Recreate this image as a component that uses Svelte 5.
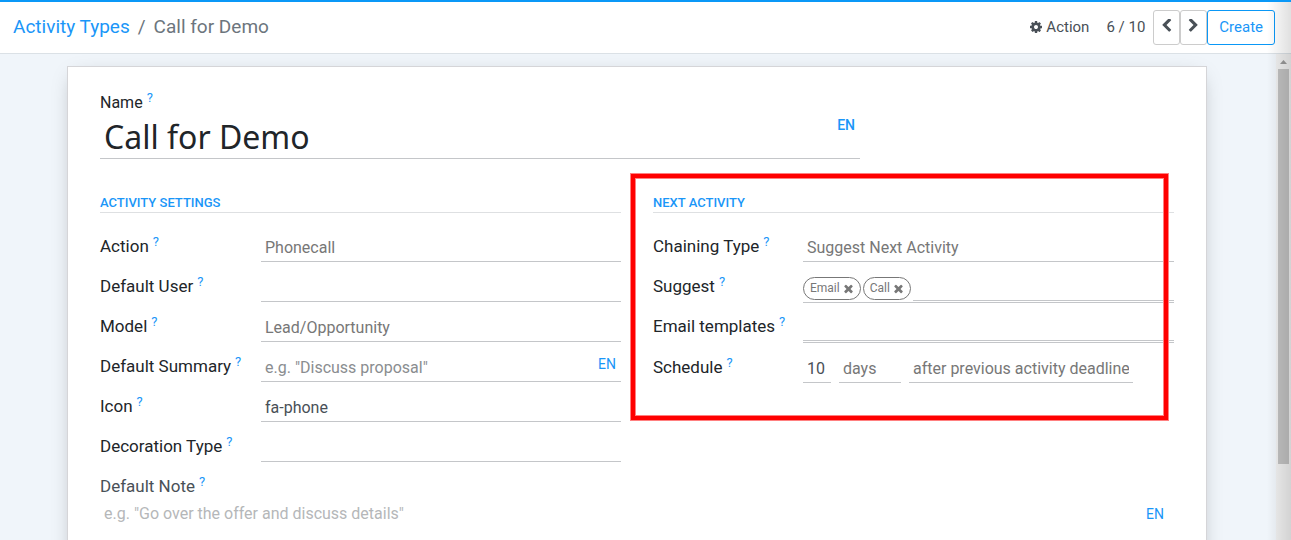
<script>
  const cog = 'M1152 896q0-106-75-181t-181-75-181 75-75 181 75 181 181 75 181-75 75-181zm512-109v222q0 12-8 23t-20 13l-185 28q-19 54-39 91 35 50 107 138 10 12 10 25t-9 23q-27 37-99 108t-94 71q-12 0-26-9l-138-108q-44 23-91 38-16 136-29 186-7 28-36 28h-222q-14 0-24.5-8.5t-11.5-21.5l-28-184q-49-16-90-37l-141 107q-10 9-25 9-14 0-25-11-126-114-165-168-7-10-7-23 0-12 8-23 15-21 51-66.5t54-70.5q-27-50-41-99l-183-27q-13-2-21-12.5t-8-23.5v-222q0-12 8-23t19-13l186-28q14-46 39-92-40-57-107-138-10-12-10-24 0-10 9-23 26-36 98.5-107.5t94.5-71.5q13 0 26 10l138 107q44-23 91-38 16-136 29-186 7-28 36-28h222q14 0 24.5 8.5t11.5 21.5l28 184q49 16 90 37l142-107q9-9 24-9 13 0 25 10 129 119 165 170 7 8 7 22 0 12-8 23-15 21-51 66.5t-54 70.5q26 50 41 98l183 28q13 2 21 12.5t8 23.5z';
  const times = 'M1490 1322q0 40-28 68l-136 136q-28 28-68 28t-68-28l-294-294-294 294q-28 28-68 28t-68-28l-136-136q-28-28-28-68t28-68l294-294-294-294q-28-28-28-68t28-68l136-136q28-28 68-28t68 28l294 294 294-294q28-28 68-28t68 28l136 136q28 28 28 68t-28 68l-294 294 294 294q28 28 28 68z';
  const chevronLeft = 'M1427 301l-531 531 531 531q19 19 19 45t-19 45l-166 166q-19 19-45 19t-45-19l-742-742q-19-19-19-45t19-45l742-742q19-19 45-19t45 19l166 166q19 19 19 45t-19 45z';
  const chevronRight = 'M1363 877l-742 742q-19 19-45 19t-45-19l-166-166q-19-19-19-45t19-45l531-531-531-531q-19-19-19-45t19-45l166-166q19-19 45-19t45 19l742 742q19 19 19 45t-19 45z';

  const settings = [
    { id: 'action', label: 'Action', type: 'select', value: 'Phonecall' },
    { id: 'user', label: 'Default User', type: 'text', value: '' },
    { id: 'model', label: 'Model', type: 'select', value: 'Lead/Opportunity' },
    { id: 'summary', label: 'Default Summary', type: 'text', value: '', placeholder: 'e.g. "Discuss proposal"', translate: true },
    { id: 'icon', label: 'Icon', type: 'text', value: 'fa-phone' },
    { id: 'decoration', label: 'Decoration Type', type: 'select', value: '' }
  ];

  let tags = $state(['Email', 'Call']);
</script>

{#snippet icon(path, size)}
  <svg class="icon" width={size} height={size} viewBox="128 128 1536 1536" aria-hidden="true"><path d={path} /></svg>
{/snippet}

{#snippet fieldLabel(id, text)}
  <label for={id}>{text}<sup>?</sup></label>
{/snippet}

<div class="page">
  <header>
    <nav>
      <a href="#types">Activity Types</a>
      <span>/</span>
      <span>Call for Demo</span>
    </nav>
    <div class="tools">
      <button class="action">{@render icon(cog, 12)}Action</button>
      <span class="pager">6 / 10</span>
      <div class="buttons">
        <button class="step" aria-label="Previous">{@render icon(chevronLeft, 13)}</button>
        <button class="step" aria-label="Next">{@render icon(chevronRight, 13)}</button>
        <button class="create">Create</button>
      </div>
    </div>
  </header>

  <div class="body">
    <main>
      <form class="sheet">
        <div class="title">
          {@render fieldLabel('name', 'Name')}
          <div class="title-field">
            <input id="name" value="Call for Demo" />
            <button type="button" class="lang bold">EN</button>
          </div>
        </div>

        <div class="groups">
          <section>
            <h2>Activity Settings</h2>
            {#each settings as f}
              <div class="row">
                {@render fieldLabel(f.id, f.label)}
                <div class="control">
                  {#if f.type === 'select'}
                    <select id={f.id}><option>{f.value}</option></select>
                  {:else}
                    <input id={f.id} value={f.value} placeholder={f.placeholder} />
                  {/if}
                  {#if f.translate}<button type="button" class="lang">EN</button>{/if}
                </div>
              </div>
            {/each}
          </section>

          <section class="next">
            <h2>Next Activity</h2>
            <div class="row">
              {@render fieldLabel('chaining', 'Chaining Type')}
              <div class="control">
                <select id="chaining"><option>Suggest Next Activity</option></select>
              </div>
            </div>
            <div class="row many first">
              {@render fieldLabel('suggest', 'Suggest')}
              <div class="control">
                {#each tags as tag}
                  <span class="tag">{tag}
                    <button type="button" aria-label="Remove {tag}" onclick={() => (tags = tags.filter((t) => t !== tag))}>{@render icon(times, 11)}</button>
                  </span>
                {/each}
                <input id="suggest" />
              </div>
            </div>
            <div class="row many">
              {@render fieldLabel('templates', 'Email templates')}
              <div class="control"><input id="templates" /></div>
            </div>
            <div class="row">
              {@render fieldLabel('delay', 'Schedule')}
              <div class="schedule">
                <input id="delay" class="count" value="10" />
                <select class="unit" aria-label="Delay unit"><option>days</option></select>
                <select class="from" aria-label="Delay from"><option>after previous activity deadline</option></select>
              </div>
            </div>
            <div class="highlight"></div>
          </section>
        </div>

        <div class="note">
          {@render fieldLabel('note', 'Default Note')}
          <div class="note-field">
            <textarea id="note" rows="1" placeholder={'e.g. "Go over the offer and discuss details"'}></textarea>
            <button type="button" class="lang">EN</button>
          </div>
        </div>
      </form>
    </main>
    <div class="scrollbar" aria-hidden="true">
      <svg width="15" height="15" viewBox="0 0 15 15"><path d="M4 10h7L7.500 6z" /></svg>
      <div class="thumb"></div>
    </div>
  </div>
</div>

<style>
  :global(body) {
    margin: 0;
  }

  .page {
    position: relative;
    display: flex;
    flex-direction: column;
    height: 100vh;
    overflow: hidden;
    color: #212529;
    font-family: Roboto, "Liberation Sans", sans-serif;
    font-size: 16px;
  }

  .page::after {
    content: "";
    position: absolute;
    top: 2px;
    right: 0;
    bottom: 0;
    width: 24px;
    background: linear-gradient(to right, transparent, rgba(0, 0, 0, 0.12));
    pointer-events: none;
  }

  .page * {
    box-sizing: border-box;
  }

  button,
  input,
  select,
  textarea {
    margin: 0;
    padding: 0;
    border: 0;
    border-radius: 0;
    outline: 0;
    background: none;
    color: inherit;
    font: inherit;
    appearance: none;
  }

  button {
    cursor: pointer;
  }

  .icon {
    display: block;
    fill: currentColor;
  }

  header {
    display: flex;
    align-items: center;
    justify-content: space-between;
    flex: none;
    padding: 8px 16px 8px 13px;
    border-top: 2px solid #0a98f7;
    border-bottom: 1px solid #dbe1e6;
    background: #fff;
  }

  nav {
    display: flex;
    gap: 8px;
    padding-bottom: 2px;
    color: #6c757d;
    font-size: 19px;
    line-height: 24px;
  }

  a,
  sup,
  .lang,
  h2 {
    color: #1a96f8;
    text-decoration: none;
  }

  .tools,
  .buttons,
  .action {
    display: flex;
    align-items: center;
  }

  .tools {
    color: #495057;
    font-size: 15px;
  }

  .action {
    gap: 4px;
    margin-right: 17px;
    padding-bottom: 2px;
  }

  .pager {
    margin-right: 8px;
    padding-bottom: 2px;
  }

  .step,
  .create {
    display: flex;
    align-items: center;
    justify-content: center;
    height: 35px;
    border: 1px solid #ccc;
    border-radius: 3px;
  }

  .step {
    width: 27px;
    padding-bottom: 4px;
  }

  .create {
    padding: 0 11px 2px;
    border-color: #0a98f7;
    color: #1a96f8;
  }

  .body {
    display: flex;
    flex: 1;
    min-height: 0;
  }

  main {
    flex: 1;
    overflow: hidden;
    padding: 12px 18px 0 16px;
    background: #f0f5fa;
  }

  .sheet {
    max-width: 1140px;
    min-height: 600px;
    margin: 0 auto;
    padding: 24px 32px;
    border: 1px solid #d5d5d8;
    background: #fff;
    box-shadow: 0 5px 20px -8px rgba(0, 0, 0, 0.35);
  }

  label {
    font-size: 17px;
    line-height: 24px;
    white-space: nowrap;
  }

  sup {
    margin-left: 4px;
    font-size: 13px;
    line-height: 0;
    vertical-align: 6px;
  }

  .title label {
    display: block;
    font-size: 16px;
  }

  .title-field {
    display: flex;
    max-width: 760px;
    border-bottom: 1px solid #c4c6c9;
  }

  .title-field input {
    flex: 1;
    min-width: 0;
    height: 43px;
    padding: 0 4px;
    font-family: "Noto Sans", "Open Sans", sans-serif;
    font-size: 32px;
  }

  .lang {
    align-self: flex-start;
    padding: 0 5px;
    font-size: 14px;
    line-height: 20px;
  }

  .bold {
    font-weight: 500;
  }

  .groups {
    display: grid;
    grid-template-columns: 1fr 1fr;
    gap: 32px;
    padding-top: 34px;
  }

  section {
    position: relative;
    min-width: 0;
  }

  h2 {
    margin: 0 0 9px;
    border-bottom: 1px solid #dee0e2;
    font-size: 13px;
    font-weight: 500;
    line-height: 19px;
    text-transform: uppercase;
  }

  .row {
    display: grid;
    grid-template-columns: 161px minmax(0, 1fr);
    align-items: end;
    height: 40px;
  }

  .next .row {
    grid-template-columns: 150px minmax(0, 1fr);
  }

  .row label {
    padding-bottom: 4px;
  }

  .many label {
    padding-bottom: 5px;
  }

  .next .first {
    height: 41px;
  }

  .control {
    display: flex;
    align-items: center;
    height: 28px;
    border-bottom: 1px solid #c4c6c9;
  }

  .control input,
  .control select {
    flex: 1;
    min-width: 0;
    height: 27px;
    padding: 0 4px;
  }

  input,
  textarea {
    color: #495057;
  }

  .title input {
    color: #212529;
  }

  select {
    color: #777;
  }

  ::placeholder {
    color: #8a8d90;
    opacity: 1;
  }

  .many .control {
    gap: 2px;
    padding-bottom: 1px;
  }

  .many .control input {
    height: 26px;
    border-bottom: 1px solid #c4c6c9;
  }

  .tag {
    display: flex;
    align-items: center;
    gap: 3px;
    height: 23px;
    padding: 0 6px;
    border: 1px solid #777;
    border-radius: 12px;
    color: #777;
    font-size: 12px;
  }

  .schedule {
    display: flex;
    gap: 8px;
  }

  .schedule input,
  .schedule select {
    height: 28px;
    padding: 0 4px;
    border-bottom: 1px solid #c4c6c9;
  }

  .schedule .count {
    width: 28px;
  }

  .schedule .unit {
    width: 62px;
  }

  .schedule .from {
    width: 224px;
  }

  .highlight {
    position: absolute;
    top: -19px;
    right: 6px;
    left: -22px;
    height: 246px;
    border: 4px solid #f00;
    box-shadow: 0 0 0 1px #ff8080, inset 0 0 0 1px #ff8080;
    pointer-events: none;
  }

  .note {
    padding-top: 12px;
    color: #495057;
  }

  .note label {
    display: block;
  }

  .note-field {
    display: flex;
    padding: 4px 5px 0 4px;
  }

  .note textarea {
    flex: 1;
    height: 24px;
    line-height: 24px;
    resize: none;
    overflow: hidden;
  }

  .note .lang {
    line-height: 24px;
  }

  .note ::placeholder {
    color: #b5b7b9;
  }

  .scrollbar {
    flex: none;
    width: 15px;
    background: #f0f0f0;
  }

  .scrollbar svg {
    display: block;
    fill: #999;
  }

  .thumb {
    height: 395px;
    margin: 0 2px;
    background: #c1c1c1;
  }
</style>
